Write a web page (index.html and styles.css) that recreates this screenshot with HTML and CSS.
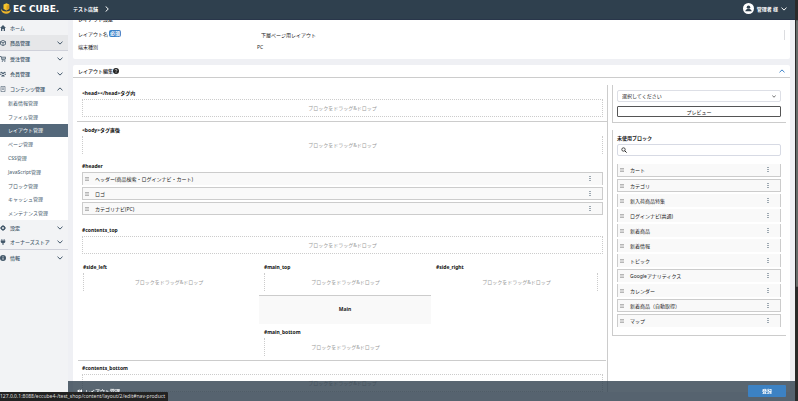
FILE: index.html
```html
<!DOCTYPE html>
<html lang="ja">
<head>
<meta charset="utf-8">
<title>レイアウト管理</title>
<link rel="stylesheet" href="styles.css">
</head>
<body>
<svg class="defs" aria-hidden="true">
  <symbol id="down" viewBox="0 0 6 4"><path d="M.5.7 3 3.1 5.500.7" fill="none" stroke="currentColor" stroke-width="1"/></symbol>
  <symbol id="up" viewBox="0 0 6 4"><path d="M.5 3.300 3 .9 5.500 3.300" fill="none" stroke="currentColor" stroke-width="1"/></symbol>
  <symbol id="bars" viewBox="0 0 4 4"><path d="M0 .5h4M0 2h4M0 3.500h4" stroke="currentColor" stroke-width=".7"/></symbol>
  <symbol id="dots" viewBox="0 0 2 6"><path d="M.5 0h1v1h-1zM.5 2h1v1h-1zM.5 4h1v1h-1z" fill="currentColor"/></symbol>
</svg>
<header class="top">
  <a class="logo" href="#"><svg viewBox="0 0 10 11"><path d="M2.500 1.500 5.500.3 8.200 1.500v4.300L5.500 7.500 2.500 6z" fill="#f6c62d"/><path d="M5.500 2.800 8.200 1.500v4.300L5.500 7.500z" fill="#dd9f1c"/><path d="M0 5.500c.5 2 2.500 3 5 3s4.500-.8 5-2.500c0 3-2 4.700-5 4.700S0 8.500 0 5.500z" fill="#efb52a"/></svg><span>EC CUBE.</span></a>
  <a class="shop" href="#">テスト店舗<svg viewBox="0 0 4 6"><path d="M.6.4 3.300 3 .6 5.600" fill="none" stroke="currentColor"/></svg></a>
  <button class="user"><svg class="avatar" viewBox="0 0 12 12"><circle cx="6" cy="6" r="6" fill="#fff"/><circle cx="6" cy="4.500" r="1.900" fill="#2f404e"/><path d="M2.500 9c.3-2 1.500-2.500 3.500-2.500S9.200 7 9.500 9z" fill="#2f404e"/></svg>管理者 様<svg class="chev"><use href="#down"/></svg></button>
</header>
<div class="shell">
  <nav class="side">
    <a class="item" href="#"><svg viewBox="0 0 6 6"><path d="M0 3 3 0l3 3H5v3H3.700V4H2.300v2H1V3z" fill="currentColor"/></svg>ホーム</a>
    <a class="item hover" href="#"><svg viewBox="0 0 6 6"><path d="M3 .4 5.500 1.600v2.800L3 5.600.5 4.400V1.600zM.5 1.600 3 2.800l2.500-1.200M3 2.800v2.800" fill="none" stroke="currentColor" stroke-width=".8"/></svg>商品管理<svg class="chev"><use href="#down"/></svg></a>
    <a class="item" href="#"><svg viewBox="0 0 6 6"><path d="M0 .5h1.200L2 4h3.500M1.500 1.200h4.300L5.300 3H2" fill="none" stroke="currentColor" stroke-width=".8"/><path d="M1.800 4.800h1v1h-1zM4.300 4.800h1v1h-1z" fill="currentColor"/></svg>受注管理<svg class="chev"><use href="#down"/></svg></a>
    <a class="item" href="#"><svg viewBox="0 0 6 6"><circle cx="1.200" cy="1.500" r=".8"/><circle cx="4.800" cy="1.500" r=".8"/><circle cx="3" cy="2.300" r="1"/><path d="M0 2.700h1.500v1H0zM4.500 2.700H6v1H4.500zM1.200 5.500c0-2 3.600-2 3.600 0z"/></svg>会員管理<svg class="chev"><use href="#down"/></svg></a>
    <a class="item" href="#"><svg viewBox="0 0 6 6"><path d="M1 .4h4v5.200H1zM2 2h2M2 3.300h2" fill="none" stroke="currentColor" stroke-width=".6"/></svg>コンテンツ管理<svg class="chev"><use href="#up"/></svg></a>
    <div class="sub">
      <a href="#">新着情報管理</a><a href="#">ファイル管理</a><a class="active" href="#">レイアウト管理</a><a href="#">ページ管理</a><a href="#">CSS管理</a><a href="#">JavaScript管理</a><a href="#">ブロック管理</a><a href="#">キャッシュ管理</a><a href="#">メンテナンス管理</a>
    </div>
    <a class="item" href="#"><svg viewBox="0 0 6 6"><circle cx="3" cy="3" r="1.600" fill="none" stroke="currentColor" stroke-width="1.300"/><path d="M3 0v1M3 5v1M0 3h1M5 3h1M1 1l.6.6M4.400 4.400l.6.6M5 1l-.6.6M1 5l.6-.6" stroke="currentColor"/></svg>設定<svg class="chev"><use href="#down"/></svg></a>
    <a class="item line" href="#"><svg viewBox="0 0 6 6"><path d="M1.500 0h.8v1.500h1.400V0h.8v1.500h.8v1C5.300 3.700 4.500 4 3.500 4.200V6h-1V4.200C1.500 4 .7 3.700.7 2.500v-1h.8z" fill="currentColor"/></svg>オーナーズストア<svg class="chev"><use href="#down"/></svg></a>
    <a class="item" href="#"><svg viewBox="0 0 6 6"><circle cx="3" cy="3" r="3" fill="currentColor"/><path d="M2.600 1.200h.8V2h-.8zM2.600 2.500h.8v2.300h-.8z" fill="#fff"/></svg>情報<svg class="chev"><use href="#down"/></svg></a>
  </nav>
  <main class="main">
    <section class="card settings">
      <h2>レイアウト設定</h2>
      <div class="field"><label for="name">レイアウト名<span class="badge">必須</span></label><input id="name" value="下層ページ用レイアウト"></div>
      <div class="field"><span class="cap">端末種別</span><span>PC</span></div>
    </section>
    <section class="card editor">
      <div class="card-head"><h2>レイアウト編集</h2><svg class="help" viewBox="0 0 6 6"><circle cx="3" cy="3" r="3" fill="#222"/><path d="M2 2.300c0-1.300 2-1.200 2-.1C4 3 3 2.900 3 3.700M3 4.200v.8" fill="none" stroke="#fff" stroke-width=".6"/></svg><svg class="chev"><use href="#up"/></svg></div>
      <div class="cols">
        <div class="canvas">
          <div class="area under"><h3>&lt;head&gt;&lt;/head&gt;タグ内</h3><div class="zone full">ブロックをドラッグ&amp;ドロップ</div></div>
          <div class="area tall"><h3>&lt;body&gt;タグ直後</h3><div class="zone sides">ブロックをドラッグ&amp;ドロップ</div></div>
          <div class="area tall"><h3>#header</h3>
            <div class="blocks">
              <div class="block t"><svg class="bars"><use href="#bars"/></svg>ヘッダー(商品検索・ログインナビ・カート)<button aria-label="メニュー"><svg><use href="#dots"/></svg></button></div>
              <div class="block t b"><svg class="bars"><use href="#bars"/></svg>ロゴ<button aria-label="メニュー"><svg><use href="#dots"/></svg></button></div>
              <div class="block t b"><svg class="bars"><use href="#bars"/></svg>カテゴリナビ(PC)<button aria-label="メニュー"><svg><use href="#dots"/></svg></button></div>
            </div>
          </div>
          <div class="area tall"><h3>#contents_top</h3><div class="zone full">ブロックをドラッグ&amp;ドロップ</div></div>
          <div class="trio">
            <div class="left"><h3>#side_left</h3><div class="zone start">ブロックをドラッグ&amp;ドロップ</div></div>
            <div class="mid"><h3>#main_top</h3><div class="zone start">ブロックをドラッグ&amp;ドロップ</div><div class="mainbox">Main</div><h3>#main_bottom</h3><div class="zone start">ブロックをドラッグ&amp;ドロップ</div></div>
            <div class="right"><h3>#side_right</h3><div class="zone end">ブロックをドラッグ&amp;ドロップ</div></div>
          </div>
          <div class="area"><h3>#contents_bottom</h3><div class="zone full">ブロックをドラッグ&amp;ドロップ</div></div>
        </div>
        <aside class="tools">
          <div class="panel preview">
            <div class="pick"><select aria-label="ページ"><option>選択してください</option></select><svg class="chev"><use href="#down"/></svg></div>
            <button class="outline">プレビュー</button>
          </div>
          <div class="panel unused">
            <label for="q">未使用ブロック</label>
            <div class="search"><svg viewBox="0 0 6 6"><circle cx="2.500" cy="2.500" r="1.700" fill="none" stroke="#222" stroke-width=".8"/><path d="m3.800 3.800 1.800 1.800" stroke="#222"/></svg><input id="q" type="search"></div>
            <div class="blocks">
              <div class="block b"><svg class="bars"><use href="#bars"/></svg>カート<button aria-label="メニュー"><svg><use href="#dots"/></svg></button></div>
              <div class="block t b"><svg class="bars"><use href="#bars"/></svg>カテゴリ<button aria-label="メニュー"><svg><use href="#dots"/></svg></button></div>
              <div class="block"><svg class="bars"><use href="#bars"/></svg>新入荷商品特集<button aria-label="メニュー"><svg><use href="#dots"/></svg></button></div>
              <div class="block"><svg class="bars"><use href="#bars"/></svg>ログインナビ(共通)<button aria-label="メニュー"><svg><use href="#dots"/></svg></button></div>
              <div class="block"><svg class="bars"><use href="#bars"/></svg>新着商品<button aria-label="メニュー"><svg><use href="#dots"/></svg></button></div>
              <div class="block"><svg class="bars"><use href="#bars"/></svg>新着情報<button aria-label="メニュー"><svg><use href="#dots"/></svg></button></div>
              <div class="block"><svg class="bars"><use href="#bars"/></svg>トピック<button aria-label="メニュー"><svg><use href="#dots"/></svg></button></div>
              <div class="block t"><svg class="bars"><use href="#bars"/></svg>Googleアナリティクス<button aria-label="メニュー"><svg><use href="#dots"/></svg></button></div>
              <div class="block"><svg class="bars"><use href="#bars"/></svg>カレンダー<button aria-label="メニュー"><svg><use href="#dots"/></svg></button></div>
              <div class="block t b"><svg class="bars"><use href="#bars"/></svg>新着商品（自動取得）<button aria-label="メニュー"><svg><use href="#dots"/></svg></button></div>
              <div class="block t"><svg class="bars"><use href="#bars"/></svg>マップ<button aria-label="メニュー"><svg><use href="#dots"/></svg></button></div>
            </div>
          </div>
        </aside>
      </div>
    </section>
  </main>
</div>
<footer class="actions"><a href="#"><svg viewBox="0 0 6 4"><path d="M3 0v4L0 2zM6 0v4L3 2z" fill="currentColor"/></svg>レイアウト管理</a><button>登録</button></footer>
<div class="status">127.0.0.1:8088/eccube4-/test_shop/content/layout/2/edit#nav-product</div>
<div class="scroll"><div class="thumb"></div></div>
</body>
</html>
```
FILE: styles.css
```css
* { box-sizing: border-box; }
body {
  margin: 0;
  height: 100vh;
  overflow: hidden;
  background: #eff0f4;
  color: #222;
  font: 5px/8px "Noto Sans", "Noto Sans CJK JP", sans-serif;
}
h2, h3 { margin: 0; font-size: 5px; line-height: 8px; }
h2 { font-weight: 500; }
h3 { font-weight: 700; color: #111; }
a { color: inherit; text-decoration: none; }
button, input, select { font: inherit; color: inherit; margin: 0; padding: 0; border: 0; background: none; }
svg { display: block; flex: none; }
.defs { position: absolute; width: 0; height: 0; }
.chev { width: 6px; height: 4px; }

.top {
  position: fixed;
  inset: 0 3px auto 0;
  z-index: 2;
  height: 20px;
  display: flex;
  align-items: center;
  padding: 0 8px 2px 1px;
  background: #2f404e;
  border-bottom: 1px solid #29364a;
  color: #fff;
}
.logo { display: flex; align-items: center; gap: 2px; width: 72px; font: 700 9px/12px "DejaVu Sans", sans-serif; }
.logo svg { width: 10px; height: 11px; }
.shop { display: flex; align-items: center; gap: 7px; font-weight: 700; }
.shop svg { width: 4px; height: 6px; }
.user { margin-left: auto; display: flex; align-items: center; gap: 3px; font-weight: 700; }
.avatar { width: 11px; height: 11px; }

.shell { display: flex; height: 100%; margin-right: 3px; }
.side { width: 68px; flex: none; padding-top: 20px; background: #f2f3f5; color: #43586a; overflow: hidden; }
.item { display: flex; align-items: center; height: 15px; padding-right: 5px; gap: 4px; font-weight: 500; }
.item > svg:first-child { width: 6px; height: 6px; fill: currentColor; }
.item .chev { margin-left: auto; }
.item.hover { height: 16px; background: #e6e7e9; border-bottom: 1px solid #cfd1da; }
.item.line { border-bottom: 1px solid #cfd1da; }
.sub { display: grid; grid-auto-rows: 1fr; height: 124px; background: #fff; }
.sub a { display: flex; align-items: center; padding-left: 8px; }
.sub .active { background: #54687a; color: #fff; }

.main { flex: 1; min-width: 0; padding: 10px 5px 0; }
.card { background: #fff; border-radius: 2px; }
.settings { height: 49px; padding: 5px; }
.settings h2 { margin-bottom: 4px; }
.field { display: flex; align-items: center; height: 13px; }
.field label, .cap { display: flex; align-items: center; gap: 1px; width: 179px; }
.badge { padding: 0 1px; border-radius: 2px; background: #3c82c8; color: #fff; font-weight: 700; line-height: 7px; }
.field input { flex: 1; height: 10px; margin-top: 2px; padding-left: 4px; border-right: 1px solid #dcdde0; }
.editor { margin-top: 6px; }
.card-head { display: flex; align-items: center; height: 13px; padding: 0 5px; border-bottom: 1px solid #ccc; }
.help { width: 6px; height: 6px; }
.card-head .chev { margin-left: auto; color: #3c82c8; }
.cols { display: flex; gap: 4px; padding: 7px 4px 0; }
.canvas { flex: 1; min-width: 0; border-right: 1px solid #ccc; padding-top: 4px; }
.area { padding: 0 4px 0 5px; }
.area h3 { margin-bottom: 2px; }
.under { padding-bottom: 4px; border-bottom: 1px solid #ccc; margin-bottom: 4px; }
.zone { height: 18px; display: flex; align-items: center; justify-content: center; color: #999; border: 0 dotted #ccc; }
.full { border-width: 1px; }
.sides { border-width: 0 1px; }
.start { border-left-width: 1px; }
.end { border-right-width: 1px; }
.area.tall { padding-bottom: 8px; }
.blocks { display: grid; gap: 2px; margin-bottom: 3px; }
.block { display: flex; align-items: center; height: 13px; padding-left: 2px; border: 0 solid #ccc; border-width: 0 1px; background: #f9f9f9; }
.t { border-top-width: 1px; }
.b { border-bottom-width: 1px; }
.bars { width: 4px; height: 4px; margin-right: 6px; color: #999; }
.block button { width: 4px; height: 8px; margin: 0 10px 0 auto; display: grid; place-items: center; color: #43586a; }
.block button svg { width: 2px; height: 6px; }
.trio { display: grid; grid-template-columns: 177fr 172fr 172fr; margin: 0 1px 3px; padding: 1px 3px 4px 4px; border-bottom: 1px solid #ccc; }
.trio h3 { margin-bottom: 2px; }
.left { padding: 0 5px 0 1px; }
.mid, .right { padding: 0 5px; }
.mainbox { display: grid; place-items: center; height: 29px; margin: 4px -5px 4px; padding-bottom: 2px; background: #f9f9f9; border-top: 1px solid #ccc; font-weight: 700; }
.tools { width: 174px; flex: none; }
.panel { padding: 5px 5px 0 4px; border: 0 solid #ccc; border-width: 0 0 1px 1px; }
.preview { height: 38px; margin-bottom: 7px; }
.pick { display: flex; align-items: center; height: 12px; margin-bottom: 4px; padding: 0 4px; border: 1px solid #dddfe6; border-radius: 2px; }
.pick select { flex: 1; appearance: none; }
.pick .chev { width: 4px; height: 3px; }
.outline { width: 100%; height: 11px; display: block; line-height: 8px; border: 1px solid #555; border-radius: 1px; }
.unused { padding-top: 4px; padding-bottom: 5px; }
.unused label { display: block; font-weight: 700; }
.search { display: flex; align-items: center; height: 12px; margin: 2px 0 8px; padding-left: 3px; border: 1px solid #d7dae4; border-radius: 2px; }
.search svg { width: 6px; height: 6px; }
.search input { flex: 1; min-width: 0; outline: 0; }

.actions {
  position: fixed;
  inset: auto 3px 0 68px;
  height: 20px;
  display: flex;
  align-items: center;
  justify-content: space-between;
  padding: 0 9px;
  background: rgba(47, 64, 78, .8);
  color: #fff;
}
.actions a { display: flex; align-items: center; gap: 3px; font-weight: 500; }
.actions svg { width: 5px; height: 4px; }
.actions button { width: 38px; height: 12px; border-radius: 1px; background: #3c82c4; font-weight: 700; }
.status {
  position: fixed;
  left: 0;
  bottom: 0;
  height: 9px;
  padding-right: 3px;
  border-radius: 0 1px 0 0;
  background: #222;
  color: #ddd;
  white-space: nowrap;
}
.scroll { position: fixed; inset: 0 0 0 auto; width: 3px; padding-top: 20px; background: #2b2b2b; }
.thumb { height: 70%; margin-left: 1px; border-radius: 1px; background: #666b69; }
```
